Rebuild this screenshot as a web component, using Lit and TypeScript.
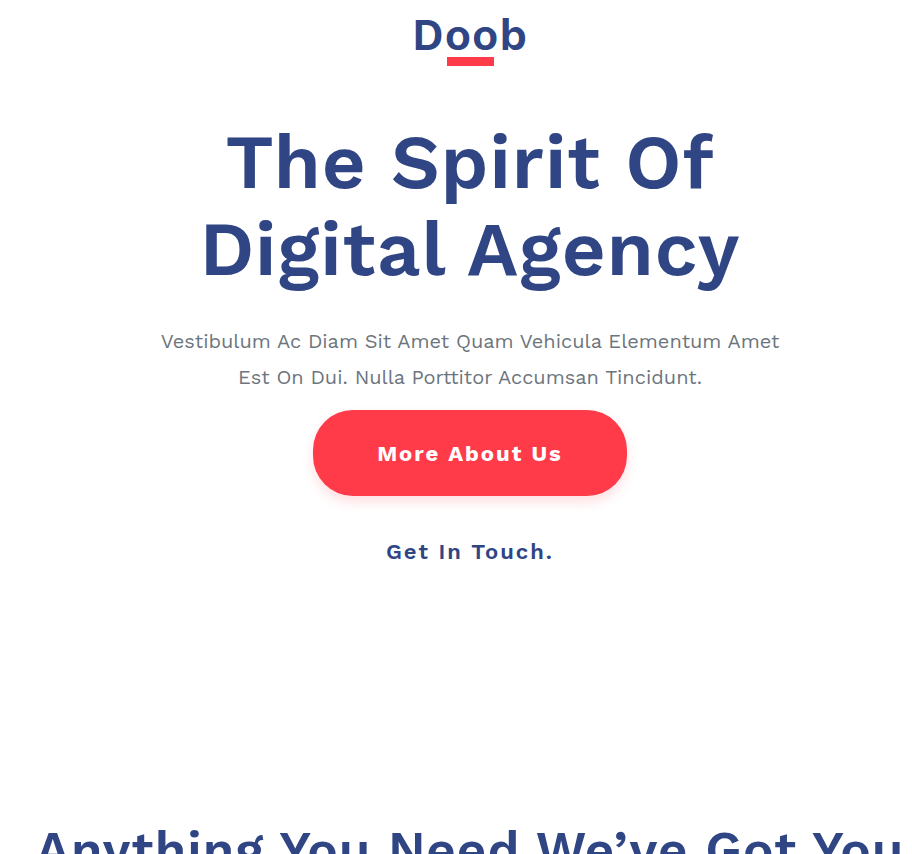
import { LitElement, html, css } from "lit";
import { customElement } from "lit/decorators.js";

@customElement("app-root")
export class AppRoot extends LitElement {
  static styles = css`
    :host {
      display: block;
      background: #fff;
      color: #304584;
      font-family: "Work Sans", Inter, "Liberation Sans", sans-serif;
    }
    .page {
      display: flex;
      flex-direction: column;
      align-items: center;
      padding-left: 28px;
      text-align: center;
    }
    .logo {
      display: flex;
      flex-direction: column;
      align-items: center;
      color: inherit;
      font-size: 44px;
      font-weight: 600;
      letter-spacing: 1px;
      line-height: 44px;
      padding-top: 13px;
      text-decoration: none;
    }
    .logo::after {
      content: "";
      width: 47px;
      height: 9px;
      background: #ff3a49;
    }
    .hero {
      display: flex;
      flex-direction: column;
      align-items: center;
      padding-top: 52px;
    }
    h1 {
      margin: 0;
      font-size: 76px;
      font-weight: 600;
      letter-spacing: 1px;
      line-height: 87px;
    }
    .lead {
      margin: 31px 0 15px;
      color: #6c757d;
      font-size: 20px;
      line-height: 36px;
    }
    .primary {
      border: 0;
      border-radius: 40px;
      padding: 0 64px;
      height: 86px;
      background: #ff3a49;
      box-shadow: 0 6px 12px rgba(255, 58, 73, 0.16);
      color: #fff;
      font: inherit;
      font-size: 22px;
      font-weight: 700;
      letter-spacing: 2px;
      cursor: pointer;
    }
    .contact {
      margin-top: 41px;
      color: inherit;
      font-size: 22px;
      font-weight: 600;
      letter-spacing: 2px;
      line-height: 30px;
      text-decoration: none;
    }
    .services {
      padding-top: 251px;
    }
    h2 {
      margin: 0;
      font-size: 51px;
      font-weight: 600;
      letter-spacing: 1px;
      line-height: 64px;
      white-space: nowrap;
    }
  `;

  render() {
    return html`
      <main class="page">
        <a class="logo" href="#">Doob</a>
        <section class="hero">
          <h1>The Spirit Of<br />Digital Agency</h1>
          <p class="lead">
            Vestibulum Ac Diam Sit Amet Quam Vehicula Elementum Amet<br />
            Est On Dui. Nulla Porttitor Accumsan Tincidunt.
          </p>
          <button class="primary" type="button">More About Us</button>
          <a class="contact" href="#contact">Get In Touch.</a>
        </section>
        <section class="services">
          <h2>Anything You Need We’ve Got You</h2>
        </section>
      </main>
    `;
  }
}
